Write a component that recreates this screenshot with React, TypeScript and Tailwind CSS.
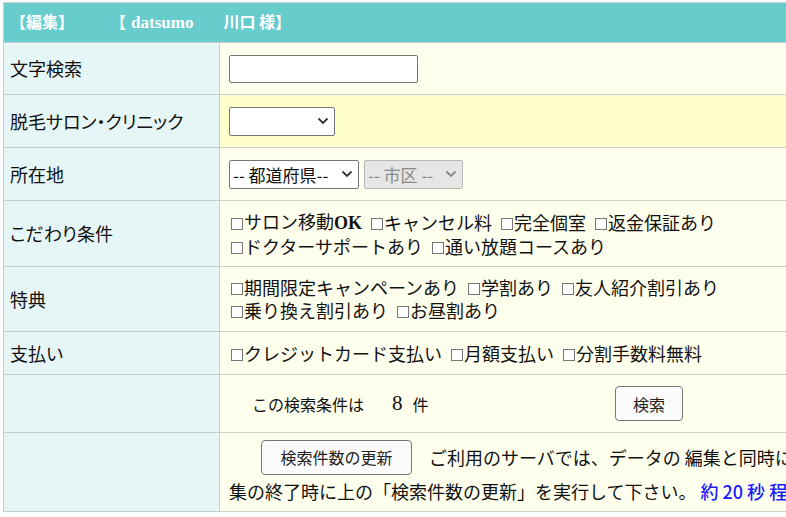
import React from "react";

const jp = { fontFamily: '"Noto Sans CJK JP", "Noto Sans", sans-serif' };
const palt = { fontFeatureSettings: '"palt"' };
const serif = { fontFamily: '"Liberation Serif", serif' };

function Chevron({ color = "#333" }: { color?: string }) {
  return (
    <svg width="12" height="8" viewBox="0 0 12 8" className="shrink-0">
      <path d="M1.5 1.5 L6 6 L10.5 1.5" fill="none" stroke={color} strokeWidth="1.8" />
    </svg>
  );
}

function Select({
  label,
  width,
  disabled,
}: {
  label: string;
  width: string;
  disabled?: boolean;
}) {
  return (
    <div
      className={`inline-flex items-center justify-between h-[29px] pl-[3px] pr-[5px] border rounded-[2px] text-[17px] align-middle ${width} ${
        disabled
          ? "bg-[#e6e6e6] border-[#b5b5b5] text-[#8a8a8a]"
          : "bg-white border-[#767676] text-[#111]"
      }`}
    >
      <span className="whitespace-nowrap">{label}</span>
      <Chevron color={disabled ? "#8a8a8a" : "#333"} />
    </div>
  );
}

function Check({ children }: { children: React.ReactNode }) {
  return (
    <label className="inline-flex items-center whitespace-nowrap mr-[9px]">
      <input
        type="checkbox"
        className="appearance-none w-[12px] h-[12px] border border-[#777] bg-white mr-[1px] mt-[3px]"
      />
      <span>{children}</span>
    </label>
  );
}

const kodawari = [
  <>
    サロン移動
    <b style={serif}>OK</b>
  </>,
  "キャンセル料",
  "完全個室",
  "返金保証あり",
];
const kodawari2 = ["ドクターサポートあり", "通い放題コースあり"];
const tokuten = ["期間限定キャンペーンあり", "学割あり", "友人紹介割引あり"];
const tokuten2 = ["乗り換え割引あり", "お昼割あり"];
const shiharai = ["クレジットカード支払い", "月額支払い", "分割手数料無料"];

export default function App() {
  const label = "bg-[#e6f5f5] border border-[#cccccc] pl-[6px] text-[18px] text-[#111] w-[216px]";
  const cell = "bg-[#ffffee] border border-[#cccccc] pl-[9px] text-[17px] text-[#111]";
  return (
    <div className="w-[786px] h-[517px] overflow-hidden bg-white" style={jp}>
      <table className="border-collapse ml-[3px] mt-[2px] w-[1100px]">
        <tbody>
          <tr className="h-[40px]">
            <td
              colSpan={2}
              className="bg-[#66cccc] border border-[#cccccc] pl-[6px] text-white font-bold text-[16px] whitespace-nowrap"
            >
              【編集】
              <span className="ml-[44px]">【</span>
              <span className="ml-[5px] text-[17px]" style={serif}>
                datsumo
              </span>
              <span className="ml-[30px]">川口 様】</span>
            </td>
          </tr>
          <tr className="h-[52px]">
            <td className={label} style={palt}>
              文字検索
            </td>
            <td className={cell}>
              <input
                type="text"
                className="w-[189px] h-[28px] border border-[#767676] rounded-[2px] bg-white align-middle"
              />
            </td>
          </tr>
          <tr className="h-[53px]">
            <td className={label} style={palt}>
              脱毛サロン・クリニック
            </td>
            <td className="bg-[#ffffcc] border border-[#cccccc] pl-[9px]">
              <Select label="" width="w-[106px]" />
            </td>
          </tr>
          <tr className="h-[53px]">
            <td className={label} style={palt}>
              所在地
            </td>
            <td className={cell}>
              <Select label="-- 都道府県--" width="w-[130px]" />
              <span className="inline-block w-[5px]" />
              <Select label="-- 市区 --" width="w-[99px]" disabled />
            </td>
          </tr>
          <tr className="h-[66px]">
            <td className={label} style={palt}>
              こだわり条件
            </td>
            <td className={`${cell} text-[18px] leading-[23px] pl-[11px]`}>
              <div>
                {kodawari.map((k, i) => (
                  <Check key={i}>{k}</Check>
                ))}
              </div>
              <div>
                {kodawari2.map((k) => (
                  <Check key={k}>{k}</Check>
                ))}
              </div>
            </td>
          </tr>
          <tr className="h-[65px]">
            <td className={label} style={palt}>
              特典
            </td>
            <td className={`${cell} text-[18px] leading-[23px] pl-[11px]`}>
              <div>
                {tokuten.map((k) => (
                  <Check key={k}>{k}</Check>
                ))}
              </div>
              <div>
                {tokuten2.map((k) => (
                  <Check key={k}>{k}</Check>
                ))}
              </div>
            </td>
          </tr>
          <tr className="h-[43px]">
            <td className={label} style={palt}>
              支払い
            </td>
            <td className={`${cell} text-[18px] pl-[11px]`}>
              {shiharai.map((k) => (
                <Check key={k}>{k}</Check>
              ))}
            </td>
          </tr>
          <tr className="h-[58px]">
            <td className={label}></td>
            <td className={`${cell} pl-[32px]`}>
              <div className="flex items-center">
                <span className="w-[363px] text-[16px] whitespace-nowrap flex items-center">
                  この検索条件は
                  <span className="text-[21px] ml-[28px]" style={serif}>
                    8
                  </span>
                  <span className="ml-[10px]">件</span>
                </span>
                <button className="w-[68px] h-[35px] border border-[#767676] rounded-[4px] bg-[#fbfbfb] text-[16px] text-[#222]">
                  検索
                </button>
              </div>
            </td>
          </tr>
          <tr className="h-[79px]">
            <td className={label}></td>
            <td className={`${cell} pl-[7px] text-[18px] leading-[28px]`}>
              <div className="whitespace-nowrap flex items-center">
                <span className="inline-block w-[32px]" />
                <button className="w-[151px] h-[35px] border border-[#767676] rounded-[4px] bg-[#fbfbfb] text-[16px] text-[#222]">
                  検索件数の更新
                </button>
                <span className="ml-[17px]">
                  ご利用のサーバでは、データの 編集と同時に検索件数を更新できませんので、編
                </span>
              </div>
              <div className="whitespace-nowrap mt-[2px]">
                集の終了時に上の「検索件数の更新」を実行して下さい。
                <span className="text-[#1a1aff] font-medium ml-[4px]">
                  約 20 秒 程度かかります。
                </span>
              </div>
            </td>
          </tr>
        </tbody>
      </table>
    </div>
  );
}
